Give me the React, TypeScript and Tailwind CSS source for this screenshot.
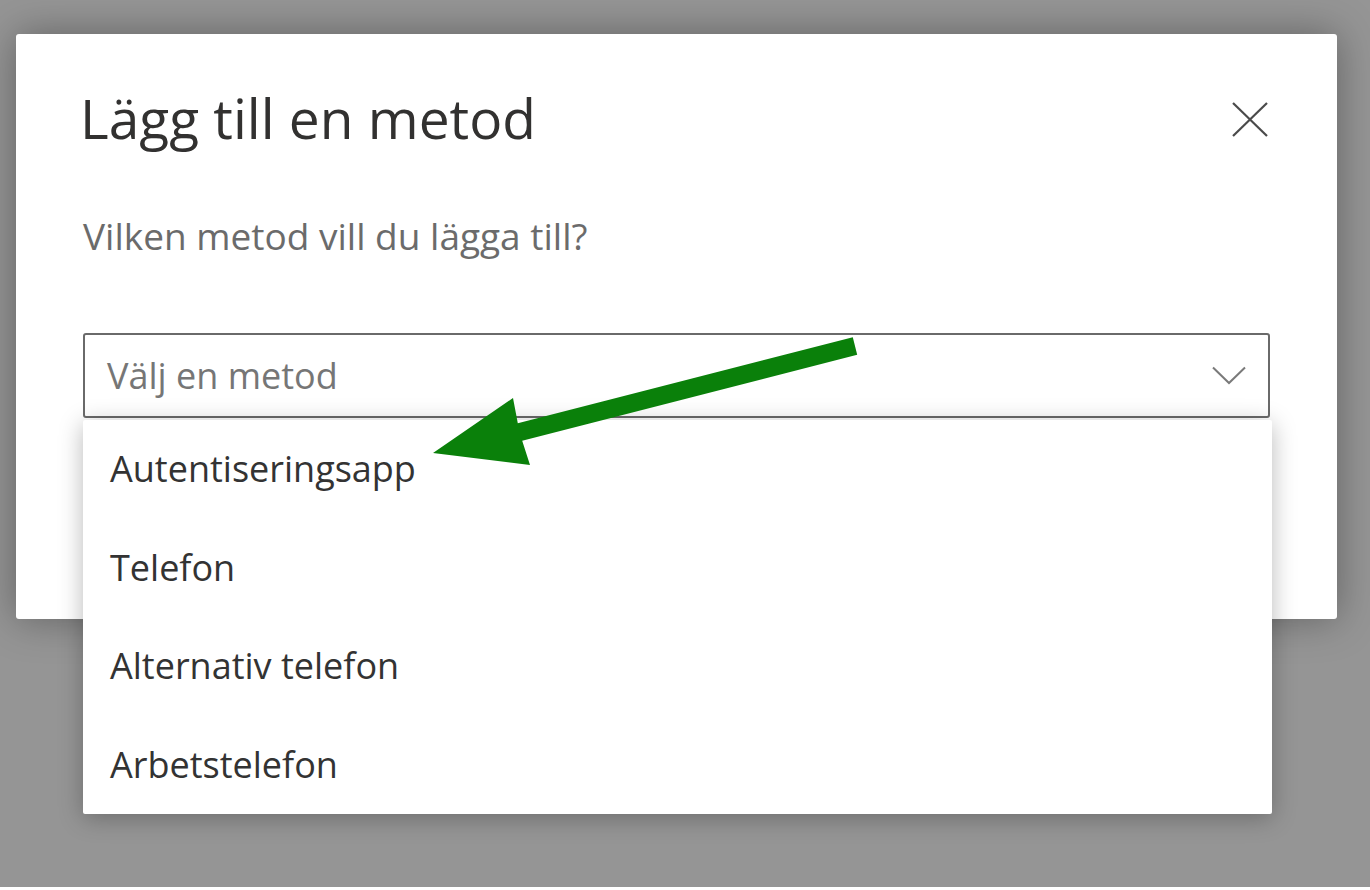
import React from "react"

const methods = ["Autentiseringsapp", "Telefon", "Alternativ telefon", "Arbetstelefon"]

function CloseIcon() {
  return (
    <svg width="36" height="36" viewBox="0 0 36 36" fill="none" stroke="#4a4a4a" strokeWidth="2.2">
      <line x1="1" y1="1" x2="35" y2="34" />
      <line x1="35" y1="1" x2="1" y2="34" />
    </svg>
  )
}

function Chevron() {
  return (
    <svg width="34" height="19" viewBox="0 0 34 19" fill="none" stroke="#7a7a7a" strokeWidth="2">
      <polyline points="1,1.5 17,17 33,1.5" />
    </svg>
  )
}

// green annotation arrow laid over the screenshot
function Arrow() {
  return (
    <svg className="absolute left-0 top-0 pointer-events-none" width="1370" height="890">
      <polygon
        fill="#0a800a"
        points="852.8,337.3 857.2,354.7 522.2,440.7 530,465 433,453 513,398 517.8,423.3"
      />
    </svg>
  )
}

export default function App() {
  return (
    <div className="relative w-[1370px] h-[890px] bg-white overflow-hidden font-['Open_Sans',sans-serif]">
      <div className="h-[887px] bg-[#959595] pt-[34px] pl-[16px]">
        <div className="relative w-[1321px] h-[585px] bg-white rounded-[3px] shadow-[0_0_40px_rgba(0,0,0,0.35)] px-[67px] pt-[52px]">
          <div className="flex items-center justify-between h-[64px]">
            <h1 className="text-[55px] leading-[64px] font-normal text-[#323130] -ml-[3px]">Lägg till en metod</h1>
            <button className="mr-[2px] mt-[4px]">
              <CloseIcon />
            </button>
          </div>

          <p className="mt-[62px] text-[37px] leading-[48px] text-[#6b6b6b]">Vilken metod vill du lägga till?</p>

          <div className="relative mt-[73px]">
            <div className="h-[85px] border-2 border-[#6a6a6a] rounded-[3px] flex items-center justify-between pl-[22px] pr-[22px]">
              <span className="text-[36px] leading-[48px] text-[#767676]">Välj en metod</span>
              <Chevron />
            </div>

            <div className="absolute left-0 top-[87px] w-[1189px] bg-white rounded-[2px] shadow-[0_4px_24px_rgba(0,0,0,0.28)]">
              {methods.map((m) => (
                <div key={m} className="h-[98.5px] flex items-center pl-[27px]">
                  <span className="text-[36px] leading-[48px] text-[#333333]">{m}</span>
                </div>
              ))}
            </div>
          </div>
        </div>
      </div>
      <Arrow />
    </div>
  )
}
